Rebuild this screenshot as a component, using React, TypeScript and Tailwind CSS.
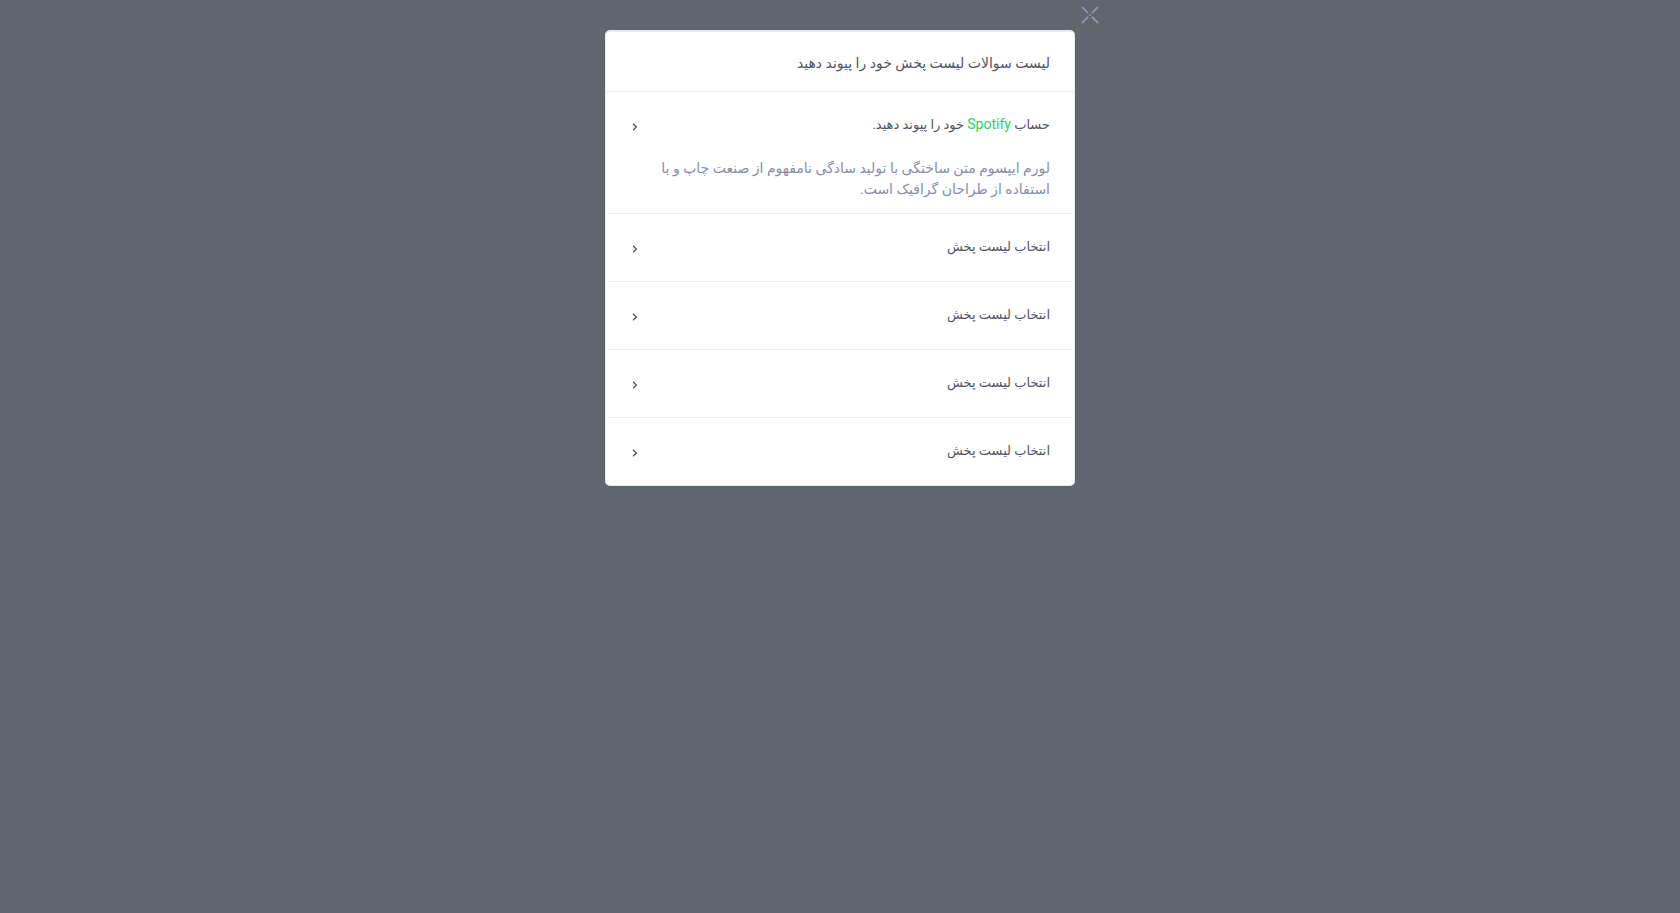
import { useState } from "react";

type Item = { id: string; title: React.ReactNode; body?: string };

const pick = "انتخاب لیست پخش";

const items: Item[] = [
  {
    id: "link",
    title: (
      <>
        حساب <span className="text-sm leading-[15px] text-[#1ed760]">Spotify</span> خود را پیوند دهید.
      </>
    ),
    body: "لورم ایپسوم متن ساختگی با تولید سادگی نامفهوم از صنعت چاپ و با استفاده از طراحان گرافیک است.",
  },
  { id: "pick-1", title: pick },
  { id: "pick-2", title: pick },
  { id: "pick-3", title: pick },
  { id: "pick-4", title: pick },
];

function Chevron() {
  return (
    <svg width="6" height="8" viewBox="0 0 6 8" fill="none" stroke="currentColor" strokeWidth="1.3" aria-hidden="true">
      <path d="M1 0.7 4.4 4 1 7.3" />
    </svg>
  );
}

function CloseIcon() {
  return (
    <svg width="18" height="18" viewBox="0 0 18 18" stroke="currentColor" strokeWidth="2" strokeLinecap="round" aria-hidden="true">
      <path d="M1.5 1.5 6.6 6.6M11.4 11.4 16.5 16.5M16.5 1.5 11.4 6.6M6.6 11.4 1.5 16.5M9 9h.01" />
    </svg>
  );
}

export default function App() {
  const [open, setOpen] = useState<string>("link");

  return (
    <div
      dir="rtl"
      className="min-h-screen bg-[#60656f] px-4 py-[30px] font-['Roboto','DejaVu_Sans',sans-serif] text-[#515365]"
    >
      <section
        role="dialog"
        aria-labelledby="dialog-title"
        className="relative mx-auto w-full max-w-[470px] rounded-[5px] border border-t-2 border-[#e6ecf5] bg-white"
      >
        <button type="button" aria-label="بستن" className="absolute -top-[26px] -right-[25px] text-[#8f92ae]">
          <CloseIcon />
        </button>
        <header className="border-b border-[#e6ecf5] px-6 pt-[21px] pb-[18px]">
          <h1 id="dialog-title" className="text-sm leading-5">
            لیست سوالات لیست پخش خود را پیوند دهید
          </h1>
        </header>
        <ul className="px-[2px]">
          {items.map((item) => (
            <li key={item.id} className="border-b border-[#e6ecf5] last:border-b-0">
              <h2>
                <button
                  type="button"
                  aria-expanded={open === item.id}
                  onClick={() => setOpen(open === item.id ? "" : item.id)}
                  className="flex w-full items-center justify-between pt-[25px] pr-[22px] pb-[23px] pl-6 text-right text-[13px] leading-[15px]"
                >
                  <span className="pb-1">{item.title}</span>
                  <Chevron />
                </button>
              </h2>
              {item.body && open === item.id && (
                <p className="-mt-px pr-[22px] pb-[13px] pl-6 text-sm leading-[21px] text-[#888da8]">{item.body}</p>
              )}
            </li>
          ))}
        </ul>
      </section>
    </div>
  );
}
